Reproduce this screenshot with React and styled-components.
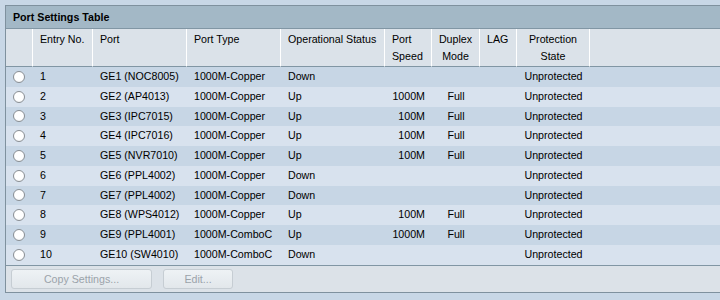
import React from "react";
import styled, { createGlobalStyle } from "styled-components";

const Global = createGlobalStyle`
  html, body { margin: 0; padding: 0; overflow: hidden; }
  body {
    background: #c8d7e6;
    font-family: "Liberation Sans", Arial, sans-serif;
    font-size: 8pt;
    color: #000;
  }
`;

const Page = styled.div`
  padding: 5px 0 0 5px;
  width: 800px;
`;

const Panel = styled.div`
  border: 1px solid #7f919e;
  width: 780px;
  background: #dce2e8;
`;

const Title = styled.div`
  height: 22px;
  line-height: 22px;
  padding-left: 7px;
  background: #a3b8c6;
  border-bottom: 1px solid #8196a4;
  font-weight: bold;
  color: #000;
`;

const Table = styled.table`
  border-collapse: separate;
  border-spacing: 0;
  width: 100%;
  table-layout: fixed;
`;

const Th = styled.th`
  background: #dbe2e9;
  border-right: 1px solid #ffffff;
  border-bottom: 1px solid #8196a4;
  height: 38px;
  padding: 2px 0 0 ${(p) => (p.$center ? 0 : 7)}px;
  box-sizing: border-box;
  vertical-align: top;
  text-align: ${(p) => (p.$center ? "center" : "left")};
  font-weight: normal;
  line-height: 17px;
  color: #000;
  &:last-child { border-right: none; }
`;

const Row = styled.tr`
  background: ${(p) => (p.$odd ? "#c7d6e5" : "#d8e2ee")};
`;

const Td = styled.td`
  padding: 0 ${(p) => (p.$right ? 7 : 0)}px 0 ${(p) => (p.$center || p.$right || p.$bare ? 0 : 7)}px;
  text-align: ${(p) => (p.$right ? "right" : p.$center ? "center" : "left")};
  white-space: nowrap;
  line-height: 19.75px;
  height: 19.75px;
  color: #000;
`;

const Radio = styled.span`
  display: block;
  width: 12px;
  height: 12px;
  margin-left: 7px;
  border-radius: 50%;
  border: 1px solid #8a8f94;
  background: radial-gradient(circle at 50% 40%, #ffffff 55%, #e6e9ec 100%);
  box-sizing: border-box;
`;

const Footer = styled.div`
  border-top: 1px solid #8196a4;
  height: 27px;
  padding: 3px 0 0 5px;
  box-sizing: border-box;
  display: flex;
  gap: 11px;
  align-items: flex-start;
  background: #dce2e8;
`;

const Button = styled.button`
  width: ${(p) => p.$w}px;
  height: 20px;
  border: 1px solid #c6cdd3;
  border-radius: 3px;
  background: linear-gradient(#eef2f5, #e2e7eb);
  color: #9ba3aa;
  font-family: "Liberation Sans", Arial, sans-serif;
  font-size: 8pt;
  padding: 0;
`;

const data = [
  ["1", "GE1 (NOC8005)", "1000M-Copper", "Down", "", ""],
  ["2", "GE2 (AP4013)", "1000M-Copper", "Up", "1000M", "Full"],
  ["3", "GE3 (IPC7015)", "1000M-Copper", "Up", "100M", "Full"],
  ["4", "GE4 (IPC7016)", "1000M-Copper", "Up", "100M", "Full"],
  ["5", "GE5 (NVR7010)", "1000M-Copper", "Up", "100M", "Full"],
  ["6", "GE6 (PPL4002)", "1000M-Copper", "Down", "", ""],
  ["7", "GE7 (PPL4002)", "1000M-Copper", "Down", "", ""],
  ["8", "GE8 (WPS4012)", "1000M-Copper", "Up", "100M", "Full"],
  ["9", "GE9 (PPL4001)", "1000M-ComboC", "Up", "1000M", "Full"],
  ["10", "GE10 (SW4010)", "1000M-ComboC", "Down", "", ""],
];

const widths = [27, 60, 94, 94, 104, 47, 48, 37, 73];

export default function App() {
  return (
    <>
      <Global />
      <Page>
        <Panel>
          <Title>Port Settings Table</Title>
          <Table>
            <colgroup>
              {widths.map((w, i) => (
                <col key={i} style={{ width: w }} />
              ))}
              <col />
            </colgroup>
            <thead>
              <tr>
                <Th />
                <Th>Entry No.</Th>
                <Th>Port</Th>
                <Th>Port Type</Th>
                <Th>Operational Status</Th>
                <Th>Port<br />Speed</Th>
                <Th $center>Duplex<br />Mode</Th>
                <Th>LAG</Th>
                <Th $center>Protection<br />State</Th>
                <Th />
              </tr>
            </thead>
            <tbody>
              {data.map((r, i) => (
                <Row key={r[0]} $odd={i % 2 === 0}>
                  <Td $bare><Radio /></Td>
                  <Td>{r[0]}</Td>
                  <Td>{r[1]}</Td>
                  <Td>{r[2]}</Td>
                  <Td>{r[3]}</Td>
                  <Td $right>{r[4]}</Td>
                  <Td $center>{r[5]}</Td>
                  <Td />
                  <Td $center>Unprotected</Td>
                  <Td />
                </Row>
              ))}
            </tbody>
          </Table>
          <Footer>
            <Button $w={141} disabled>Copy Settings...</Button>
            <Button $w={70} disabled>Edit...</Button>
          </Footer>
        </Panel>
      </Page>
    </>
  );
}
